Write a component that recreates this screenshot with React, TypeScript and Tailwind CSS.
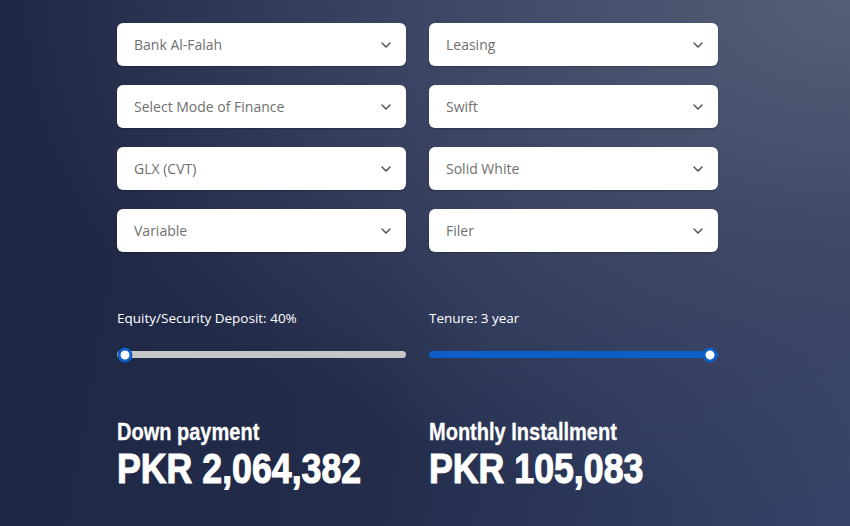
import React from 'react';

const leftSelects = ['Bank Al-Falah', 'Select Mode of Finance', 'GLX (CVT)', 'Variable'];
const rightSelects = ['Leasing', 'Swift', 'Solid White', 'Filer'];

const Chevron = () => (
  <svg width="10" height="6" viewBox="0 0 10 6" fill="none" className="shrink-0">
    <path d="M1 1l4 4 4-4" stroke="#4a4a4a" strokeWidth="1.4" strokeLinecap="round" strokeLinejoin="round" />
  </svg>
);

const SelectBox = ({ label }: { label: string }) => (
  <div className="flex h-[43px] items-center justify-between rounded-[6px] bg-white pl-[17px] pr-[15px] shadow-[0_1px_2px_rgba(0,0,0,0.25)]">
    <span className="text-[14px] text-[#707070]">{label}</span>
    <Chevron />
  </div>
);

const Slider = ({ label, value, filled }: { label: string; value: number; filled: boolean }) => (
  <div>
    <div className="text-[13.5px] leading-[18px] text-white">{label}</div>
    <div className="relative mt-[24px] h-[7px]">
      <div className={`h-full rounded-full ${filled ? 'bg-[#0b5fc6]' : 'bg-[#c6c6c6]'}`} />
      <div
        className="absolute top-1/2 h-[15px] w-[15px] -translate-x-1/2 -translate-y-1/2 rounded-full border-[3px] border-[#0b5fc6] bg-white"
        style={{ left: `${value}%` }}
      />
    </div>
  </div>
);

const Figure = ({ title, amount }: { title: string; amount: string }) => (
  <div className="whitespace-nowrap font-['Liberation_Sans',sans-serif] font-bold text-white">
    <div className="origin-left scale-x-[0.87] text-[23px] leading-[28px] [-webkit-text-stroke:0.3px_white]">{title}</div>
    <div className="mt-[1px] origin-left scale-x-[0.85] text-[42px] leading-[44px] [-webkit-text-stroke:1.1px_white]">{amount}</div>
  </div>
);

export default function App() {
  return (
    <div className="h-[526px] w-[850px] overflow-hidden bg-[radial-gradient(ellipse_at_100%_0%,#565e78_0%,#3d4765_35%,transparent_70%),linear-gradient(100deg,#1e2744_0%,#222b49_45%,#36446a_100%)] font-['Open_Sans',sans-serif]">
      <div className="ml-[117px] w-[601px] pt-[23px]">
        <div className="grid grid-cols-2 gap-x-[23px] gap-y-[19px]">
          {leftSelects.map((l, i) => (
            <React.Fragment key={l}>
              <SelectBox label={l} />
              <SelectBox label={rightSelects[i]} />
            </React.Fragment>
          ))}
        </div>

        <div className="mt-[57px] grid grid-cols-2 gap-x-[23px]">
          <Slider label="Equity/Security Deposit: 40%" value={2.8} filled={false} />
          <Slider label="Tenure: 3 year" value={97.2} filled />
        </div>

        <div className="mt-[60px] grid grid-cols-2 gap-x-[23px]">
          <Figure title="Down payment" amount="PKR 2,064,382" />
          <Figure title="Monthly Installment" amount="PKR 105,083" />
        </div>
      </div>
    </div>
  );
}
